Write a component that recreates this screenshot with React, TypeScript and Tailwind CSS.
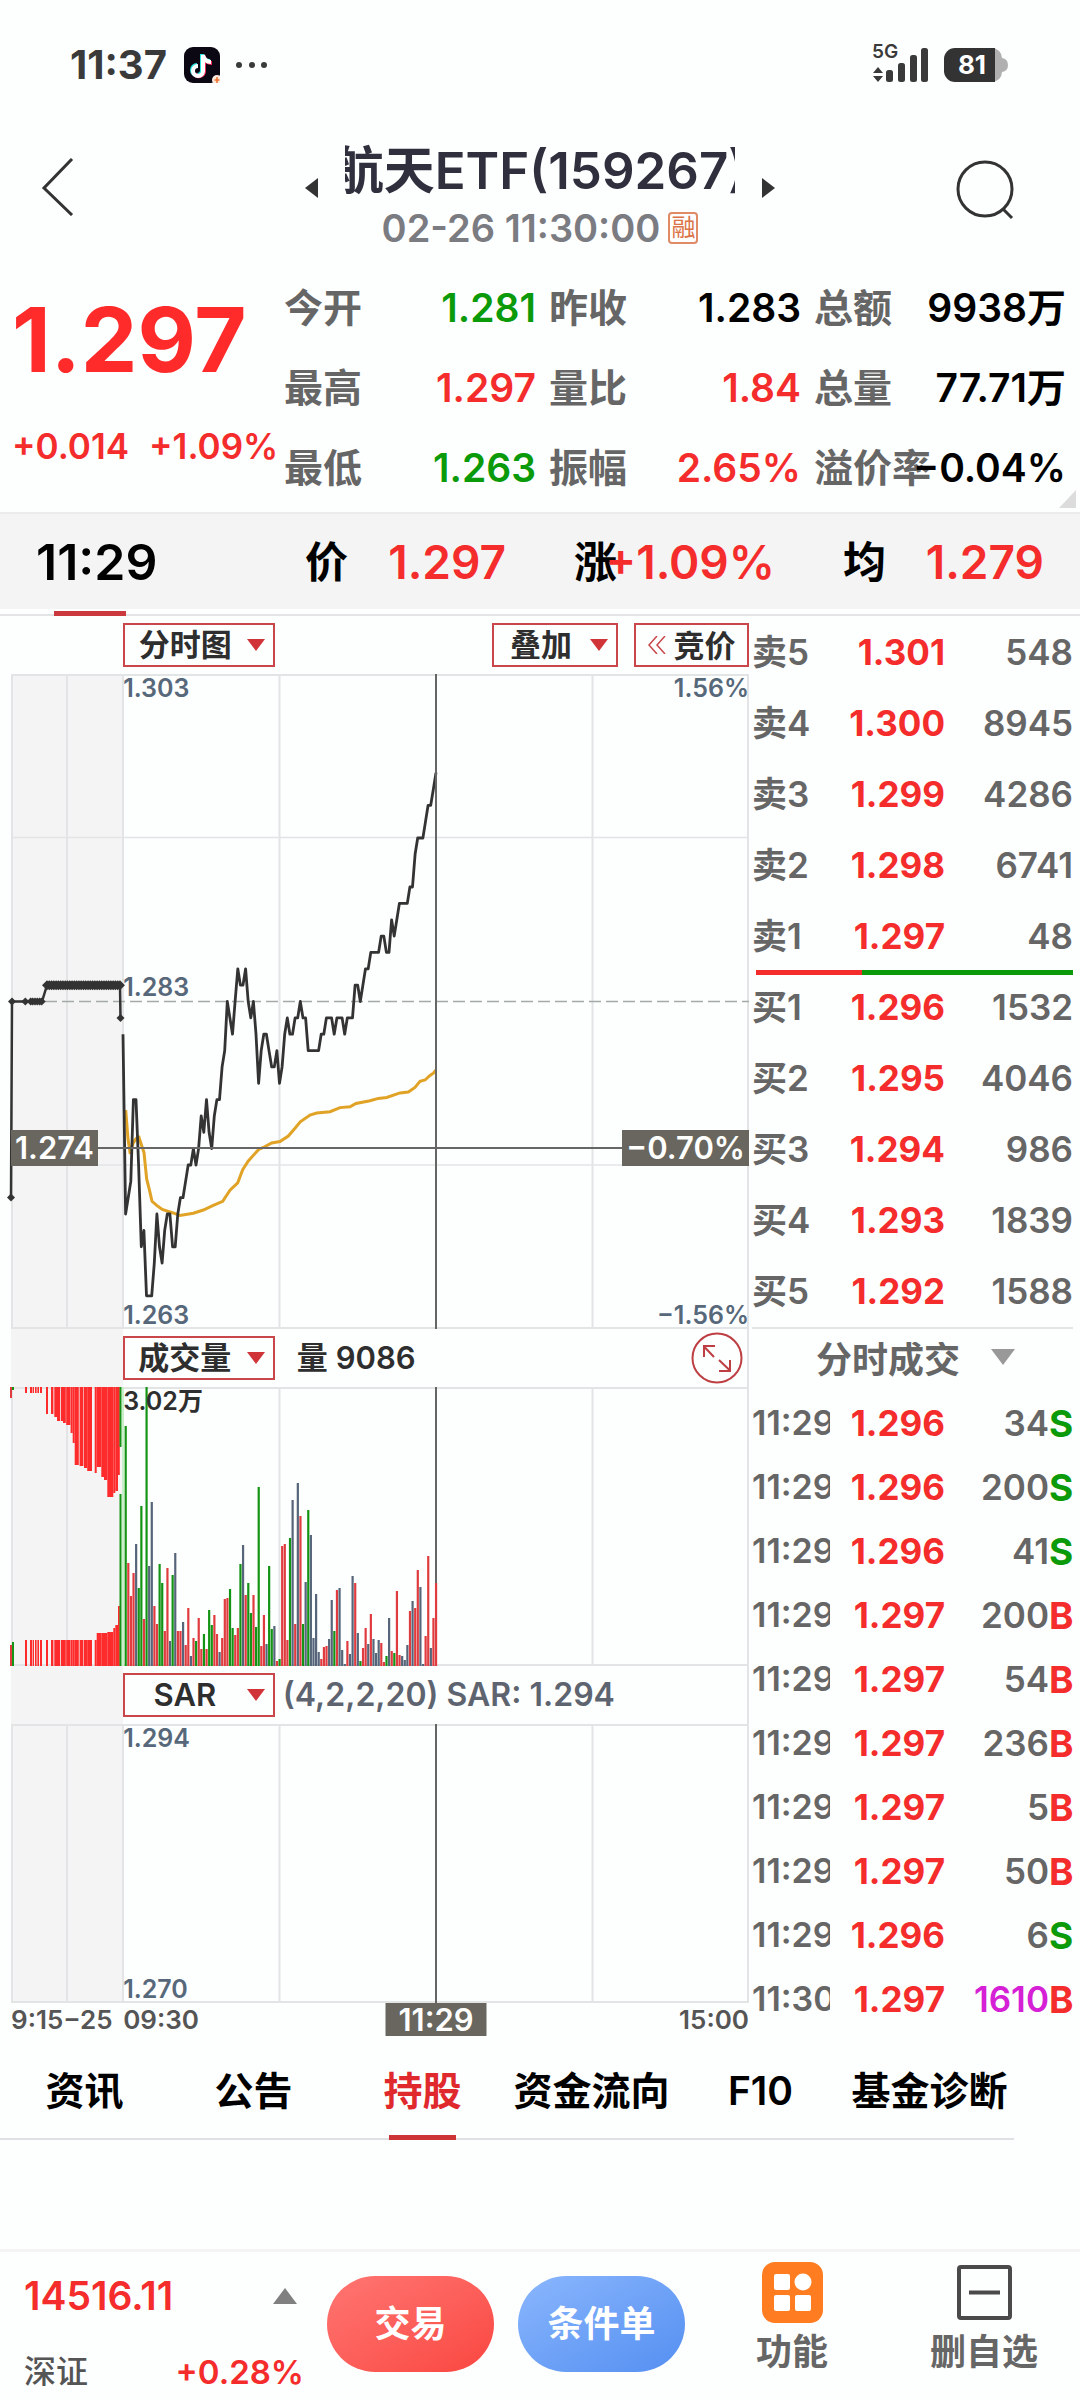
import React from "react";
import { clsx } from "clsx";

type TQuote = { label: string; value: string; color: string };
type TLevel = { label: string; price: string; volume: number };
type TTrade = { time: string; price: string; volume: number; side: "S" | "B" };

const RED = "text-[#f42c2c]";
const GREEN = "text-[#0a9a0a]";

const quotes: TQuote[] = [
  { label: "今开", value: "1.281", color: GREEN },
  { label: "昨收", value: "1.283", color: "text-black" },
  { label: "总额", value: "9938万", color: "text-black" },
  { label: "最高", value: "1.297", color: RED },
  { label: "量比", value: "1.84", color: RED },
  { label: "总量", value: "77.71万", color: "text-black" },
  { label: "最低", value: "1.263", color: GREEN },
  { label: "振幅", value: "2.65%", color: RED },
  { label: "溢价率", value: "−0.04%", color: "text-black" },
];

const asks: TLevel[] = [
  { label: "卖5", price: "1.301", volume: 548 },
  { label: "卖4", price: "1.300", volume: 8945 },
  { label: "卖3", price: "1.299", volume: 4286 },
  { label: "卖2", price: "1.298", volume: 6741 },
  { label: "卖1", price: "1.297", volume: 48 },
];

const bids: TLevel[] = [
  { label: "买1", price: "1.296", volume: 1532 },
  { label: "买2", price: "1.295", volume: 4046 },
  { label: "买3", price: "1.294", volume: 986 },
  { label: "买4", price: "1.293", volume: 1839 },
  { label: "买5", price: "1.292", volume: 1588 },
];

const trades: TTrade[] = [
  { time: "11:29", price: "1.296", volume: 34, side: "S" },
  { time: "11:29", price: "1.296", volume: 200, side: "S" },
  { time: "11:29", price: "1.296", volume: 41, side: "S" },
  { time: "11:29", price: "1.297", volume: 200, side: "B" },
  { time: "11:29", price: "1.297", volume: 54, side: "B" },
  { time: "11:29", price: "1.297", volume: 236, side: "B" },
  { time: "11:29", price: "1.297", volume: 5, side: "B" },
  { time: "11:29", price: "1.297", volume: 50, side: "B" },
  { time: "11:29", price: "1.296", volume: 6, side: "S" },
  { time: "11:30", price: "1.297", volume: 1610, side: "B" },
];

const tabs = ["资讯", "公告", "持股", "资金流向", "F10", "基金诊断"];

// price of every minute, in ticks of 0.001 from the previous close
const ticks = [
  -2, -13, -12, -11, -6, -6, -10, -15, -14, -18, -18, -18, -16, -13, -15, -16, -14, -13, -13, -15,
  -15, -13, -12, -12, -11, -10, -10, -9, -10, -9, -7, -8, -6, -8, -9, -7, -6, -6, -4, -3,
  0, -1, -2, 0, 2, 1, 1, 2, 0, -1, 0, -2, -5, -3, -2, -2, -3, -4, -4, -3,
  -5, -4, -2, -1, -2, -2, -1, -1, 0, -1, -1, -3, -3, -3, -3, -3, -2, -2, -1, -1,
  -1, -2, -1, -1, -1, -2, -1, -1, -1, 1, 1, 0, 1, 2, 2, 3, 3, 3, 3, 4,
  4, 3, 3, 5, 4, 5, 6, 6, 6, 6, 7, 7, 9, 10, 10, 10, 11, 12, 12, 13, 14,
];

const average =
  "114.7,436 117,465 119.3,480 122,469.4 125,464.8 128,463.4 130.7,471.7 133,478.6 135.7,505.2 138.3,515.3 141,527.3 145.7,531.4 151.3,535.5 161.3,538.7 169,541.5 182.3,539.2 192.3,536 202.3,531.4 211.7,527.3 219,516.2 226.7,508.9 231.7,495.6 237.3,486.9 247.7,475.4 252.3,473.5 260.7,469 269,467.6 277.3,462 284,454.3 289.3,447.8 299,441 305.7,439.1 319,437.7 329,433.6 339,432.7 345,429.5 359,426.7 367.3,424.4 375.7,423.5 389,418.9 397.3,418 404,413.4 409,407.4 414,406 419,401.5 422.3,399.2 425,396";

// one entry per minute from 9:31: colour letter and bar height
const volumes =
  "g240 r103 r70 r93 s122 g78 g160 r47 g279 s100 s164 r60 r42 g102 g83 r35 r98 s25 g91 s113 r35 r35 s44 r21 r58 s10 r28 g25 r48 r17 g32 r17 g56 g41 r51 r32 s14 r28 r67 r68 g77 g38 r31 r38 g102 s121 r71 g83 g53 r71 g39 g179 r20 r51 s22 g100 g37 s40 r5 g7 r120 r122 r26 g128 s166 r42 s183 r150 g42 s84 g156 s131 s28 s72 s14 r7 r19 r20 s27 s66 g35 r76 s78 s16 s2 r25 s12 s90 r83 s33 g5 r18 r38 s22 r52 s27 s13 s26 r23 r4 g10 s48 r15 g13 r75 r11 s10 s6 s21 r55 s65 r58 r96 s79 s2 r30 r110 s18 r48 r83".split(" ");

const volumeColors: Record<string, string> = { r: "#e03c3f", g: "#149414", s: "#56657a" };

// call auction: start, end, height from the top, height from the bottom
const auction = [
  [14, 16, 6, 26], [19, 21, 6, 26], [21.6, 23, 6, 26], [24, 25.6, 6, 26], [26.4, 28, 6, 26], [29, 31, 6, 26],
  [35, 37, 27, 26], [40, 42.4, 27, 26], [43.3, 46, 30, 26], [46, 49, 34, 26], [49.8, 52, 34, 26], [52, 54.8, 36, 26],
  [55.2, 59.4, 38, 26], [59.6, 61.7, 46, 26], [61.7, 63.7, 56, 26], [63.7, 67.8, 78, 26], [68.6, 72.4, 79, 26],
  [73, 76.2, 81, 26], [76.2, 81, 84, 26], [83.7, 85.7, 86, 26], [85.7, 90.3, 80, 33], [90.3, 93, 90, 33],
  [93, 96.3, 93, 33], [96.3, 102.3, 110, 34], [102.3, 104.3, 106, 38], [104.3, 107, 104, 41], [107, 108.8, 88, 60],
];

const minuteX = (i: number) => 112 + i * 2.608;
const tickY = (t: number) => 327.5 - t * 16.35;

function Triangle({ className }: { className?: string }) {
  return (
    <svg viewBox="0 0 18 12" className={className} aria-hidden="true">
      <path d="M0 0H18L9 12Z" fill="currentColor" />
    </svg>
  );
}

function Picker({ label, options, className }: { label: string; options: string[]; className?: string }) {
  return (
    <div className={clsx("relative h-11 border-2 border-[#c9474b] text-[#2e2e2e]", className)}>
      <select
        aria-label={label}
        className="h-full w-full appearance-none bg-transparent pr-7 text-center text-[31px] leading-10 font-semibold outline-none"
      >
        {options.map((item) => (
          <option key={item}>{item}</option>
        ))}
      </select>
      <Triangle className="pointer-events-none absolute top-[14px] right-2 h-3 w-[18px] text-[#d03438]" />
    </div>
  );
}

function StatusBar() {
  return (
    <div className="flex h-[130px] items-center pr-[72px] pl-[70px] text-[#3a3a3a]">
      <span className="text-[40px] font-bold">11:37</span>
      <svg viewBox="0 0 36 36" className="ml-[17px] h-9 w-9" aria-hidden="true">
        <rect width="36" height="36" rx="9" fill="#0b0713" />
        <g fill="none" strokeWidth="4" strokeLinecap="butt">
          <g stroke="#27e6e4">
            <path d="M18 7V23a5 5 0 1 1-5-5" />
            <path d="M18 8c1 4 4 6 8 6" />
          </g>
          <g stroke="#f5295a">
            <path d="M20 9V25a5 5 0 0 1-9 2" />
            <path d="M20 10c1 4 4 6 8 6" />
          </g>
          <g stroke="#fff">
            <path d="M19 8V24a5 5 0 1 1-5-5" />
            <path d="M19 8c1 5 4 7 8 7" />
          </g>
        </g>
        <circle cx="33" cy="33" r="5" fill="#fdebe0" />
        <path d="M33 30v6M30.500 33h5" stroke="#f0702c" strokeWidth="1.500" />
      </svg>
      <svg viewBox="0 0 32 6" className="ml-4 h-[6px] w-8" fill="currentColor" aria-hidden="true">
        <circle cx="3" cy="3" r="3" />
        <circle cx="16" cy="3" r="3" />
        <circle cx="28" cy="3" r="3" />
      </svg>
      <div className="ml-auto flex items-end gap-4 pb-1">
        <div className="relative h-[38px] w-14">
          <span className="absolute -top-1 left-0 text-[19px] leading-6 font-semibold">5G</span>
          <svg viewBox="0 0 56 38" className="h-full w-full" fill="currentColor" aria-hidden="true">
            <path d="M1 29l5-6 5 6ZM1 32h10l-5 6Z" />
            <rect x="14" y="26" width="7" height="12" rx="2.500" />
            <rect x="26" y="19" width="7" height="19" rx="2.500" />
            <rect x="38" y="11" width="7" height="27" rx="2.500" />
            <rect x="49" y="4" width="7" height="34" rx="2.500" />
          </svg>
        </div>
        <div className="relative flex h-[34px] w-16 items-center">
          <svg viewBox="0 0 64 34" className="absolute inset-0 h-full w-full" aria-hidden="true">
            <path d="M46 0h2a10 10 0 0 1 10 10q6 1 6 7t-6 7a10 10 0 0 1-10 10h-2Z" fill="#b0b0b0" />
            <path d="M51 0H11A11 11 0 0 0 0 11V23a11 11 0 0 0 11 11H51Z" fill="#333" />
          </svg>
          <span className="relative w-14 text-center text-[26px] leading-8 font-bold text-white">81</span>
        </div>
      </div>
    </div>
  );
}

function TitleBar() {
  return (
    <header className="flex h-[126px] items-start justify-between pr-[66px] pl-10">
      <button aria-label="返回" className="mt-7">
        <svg viewBox="0 0 36 58" className="h-[58px] w-9" fill="none" stroke="#333" strokeWidth="3" aria-hidden="true">
          <path d="M32 1L4 30L32 57" />
        </svg>
      </button>
      <div className="flex flex-col items-center pl-12">
        <div className="flex items-end gap-[27px]">
          <button aria-label="上一个">
            <svg viewBox="0 0 13 20" className="h-5 w-[13px]" aria-hidden="true">
              <path d="M13 0V20L0 10Z" fill="#333" />
            </svg>
          </button>
          <h1 className="mt-3 flex h-[56px] w-[390px] items-center justify-center overflow-hidden text-[51px] leading-none font-semibold whitespace-nowrap text-[#2f2f3d]">
            航天ETF(159267)
          </h1>
          <button aria-label="下一个">
            <svg viewBox="0 0 13 20" className="h-5 w-[13px]" aria-hidden="true">
              <path d="M0 0V20L13 10Z" fill="#333" />
            </svg>
          </button>
        </div>
        <div className="mt-[6px] flex items-center gap-2">
          <time className="text-[38px] leading-[48px] font-semibold text-[#7b7b82]">02-26 11:30:00</time>
          <span className="flex h-8 w-[30px] items-center justify-center rounded border-2 border-[#e08a66] text-2xl leading-none text-[#dc7347]">
            融
          </span>
        </div>
      </div>
      <button aria-label="搜索" className="mt-[30px]">
        <svg viewBox="0 0 58 60" className="h-[60px] w-[58px]" fill="none" stroke="#333" strokeWidth="3" aria-hidden="true">
          <circle cx="29" cy="29" r="27" />
          <path d="M47 49L56 58" />
        </svg>
      </button>
    </header>
  );
}

function Summary() {
  return (
    <section className="relative flex h-[256px] pt-3">
      <div className="flex w-[284px] shrink-0 flex-col pl-3 text-[#f42c2c]">
        <strong className="mt-4 text-[90px] leading-[112px] font-bold text-[#ff2a2a]">1.297</strong>
        <div className="mt-7 flex gap-5 text-[35px] leading-[44px] font-semibold whitespace-nowrap">
          <span>+0.014</span>
          <span>+1.09%</span>
        </div>
      </div>
      <dl className="grid min-w-0 flex-1 auto-rows-[80px] grid-cols-3 gap-x-[13px] pr-[14px] text-[39px]">
        {quotes.map((item) => (
          <div key={item.label} className="flex min-w-0 items-center justify-between whitespace-nowrap">
            <dt className="w-0 font-semibold text-[#666]">{item.label}</dt>
            <dd className={clsx("relative font-semibold", item.color)}>{item.value}</dd>
          </div>
        ))}
      </dl>
      <svg viewBox="0 0 17 18" className="absolute right-1 bottom-1 h-[18px] w-[17px]" aria-hidden="true">
        <path d="M17 0V18H0Z" fill="#dcdcdc" />
      </svg>
    </section>
  );
}

function CursorBar() {
  const items = [
    { label: "价", value: "1.297" },
    { label: "涨", value: "+1.09%" },
    { label: "均", value: "1.279" },
  ];
  return (
    <section className="relative h-[104px] border-b-2 border-[#e4e4e6]">
      <div className="grid h-[97px] grid-cols-4 items-center border-t-2 border-[#ececec] bg-[#f4f4f4] pt-[2px] pr-1 whitespace-nowrap">
        <div className="pl-9 text-[50px] font-semibold">11:29</div>
        {items.map((item) => (
          <div key={item.label} className="flex items-center justify-between pr-8 pl-9">
            <span className="w-0 text-[43px] font-semibold">{item.label}</span>
            <span className="relative text-[46px] font-semibold text-[#f42c2c]">{item.value}</span>
          </div>
        ))}
      </div>
      <div className="absolute -bottom-[2px] left-[54px] h-[5px] w-[72px] bg-[#c9393d]" />
    </section>
  );
}

function Grid({ height, rows }: { height: number; rows?: number[] }) {
  return (
    <g stroke="#e2e4e6" strokeWidth="2" fill="none">
      <rect x="0" y="0" width="112" height={height} fill="#f4f4f4" stroke="none" />
      <path d={`M1 0V${height}M56 0V${height}M112 0V${height}M268.500 0V${height}M581.500 0V${height}M737 0V${height}`} />
      <path d={`M0 1H738M0 ${height - 1}H738`} />
      {rows?.map((y) => <path key={y} d={`M0 ${y}H738`} strokeWidth="1.500" />)}
    </g>
  );
}

function PriceChart() {
  const line = ticks.map((t, i) => `${minuteX(i).toFixed(1)},${tickY(t).toFixed(1)}`).join(" ");
  const marks = [1, 14.300, 19.700, 21.700, 24, 26.300, 28.700, 30.700];
  const dense = Array.from({ length: 33 }, (_, i) => 36 + i * 2.280);
  return (
    <div className="relative">
      <svg viewBox="0 0 738 655" className="block h-auto w-full overflow-visible" role="img" aria-label="分时走势">
        <Grid height={655} rows={[163.5, 491]} />
        <path d="M0 327.500H738" stroke="#a4aaa8" strokeWidth="1.500" strokeDasharray="12 5" />
        <polyline points={average} fill="none" stroke="#e0a326" strokeWidth="3" />
        <g fill="#333" stroke="#333">
          <path d="M0 523.600L1 327.500H31L36 311.200H109L109.500 344" fill="none" strokeWidth="2.500" />
          <g stroke="none">
            {marks.map((x) => (
              <path key={x} d={`M${x - 4} 327.500l4-4 4 4-4 4Z`} />
            ))}
            {dense.map((x) => (
              <path key={x} d={`M${x - 5} 311.200l5-5 5 5-5 5Z`} />
            ))}
            <path d="M-4 523.600l4-4 4 4-4 4ZM105.500 344l4-4 4 4-4 4Z" />
          </g>
          <polyline points={line} fill="none" strokeWidth="2.800" strokeLinejoin="round" />
        </g>
        <path d="M0 474H738M425 0V655" stroke="#666" strokeWidth="2" />
      </svg>
      <div className="absolute inset-y-0 right-0 left-[15.2%] text-[25px] leading-7 font-semibold text-[#56687a]">
        <span className="absolute top-0 left-0">1.303</span>
        <span className="absolute top-[45.700%] left-0">1.283</span>
        <span className="absolute bottom-0 left-0">1.263</span>
        <span className="absolute top-0 right-0">1.56%</span>
        <span className="absolute right-0 bottom-0">−1.56%</span>
      </div>
      <div className="absolute inset-x-0 top-[69.600%] flex justify-between text-[31px] leading-9 font-semibold text-white">
        <span className="bg-[#68665e] px-1">1.274</span>
        <span className="bg-[#68665e] px-1">−0.70%</span>
      </div>
    </div>
  );
}

function VolumeChart() {
  return (
    <div className="relative">
      <svg viewBox="0 0 738 279" className="block h-auto w-full overflow-visible" role="img" aria-label="成交量">
        <Grid height={279} />
        <rect x="111" y="0" width="2" height="279" fill="#c9efc9" />
        {auction.map(([x1, x2, top, bottom]) => (
          <g key={x1} fill="#fd2b2b">
            <rect x={x1} y="0" width={x2 - x1} height={top} />
            <rect x={x1} y={279 - bottom} width={x2 - x1} height={bottom} />
          </g>
        ))}
        <rect x="-1" y="0" width="2" height="11" fill="#e03c3f" />
        <rect x="-1" y="258" width="2" height="21" fill="#e03c3f" />
        <rect x="1" y="0" width="2" height="3" fill="#149414" />
        <rect x="1" y="255" width="2" height="24" fill="#149414" />
        <rect x="108.500" y="0" width="2" height="60" fill="#149414" />
        <rect x="108.500" y="107" width="2" height="172" fill="#149414" />
        {volumes.map((item, i) => {
          const height = Number(item.slice(1));
          return (
            <rect key={i} x={minuteX(i + 1) - 1} y={279 - height} width="2.200" height={height} fill={volumeColors[item[0]]} />
          );
        })}
        <path d="M425 0V196" stroke="#666" strokeWidth="2" />
      </svg>
      <span className="absolute top-0 left-[15.2%] text-[25px] leading-7 font-semibold text-[#2e2e2e]">3.02万</span>
    </div>
  );
}

function SarChart() {
  return (
    <div className="relative">
      <svg viewBox="0 0 738 279" className="block h-auto w-full" role="img" aria-label="SAR">
        <Grid height={279} />
        <path d="M425 0V279" stroke="#666" strokeWidth="2" />
      </svg>
      <div className="absolute inset-y-0 left-[15.2%] flex flex-col justify-between text-[25px] leading-7 font-semibold text-[#56687a]">
        <span>1.294</span>
        <span>1.270</span>
      </div>
    </div>
  );
}

function Charts() {
  return (
    <section className="min-w-0 pl-[11px] whitespace-nowrap">
      <div className="flex h-[58px] items-center">
        <div className="w-[15.200%]" />
        <Picker label="图表类型" options={["分时图"]} className="w-[152px]" />
        <Picker label="叠加" options={["叠加"]} className="ml-auto w-[126px]" />
        <button className="ml-4 flex h-11 w-[115px] items-center justify-center gap-2 border-2 border-[#c9474b] text-[31px] leading-none font-semibold text-[#2e2e2e]">
          <svg viewBox="0 0 18 18" className="h-[18px] w-[18px]" fill="none" stroke="#c9474b" strokeWidth="1.500" aria-hidden="true">
            <path d="M9 0L1 9L9 18M17 0L9 9L17 18" />
          </svg>
          竞价
        </button>
      </div>
      <PriceChart />
      <div className="flex h-[58px] items-center border-r-2 border-[#e2e4e6]">
        <div className="h-full w-[15.200%] bg-[#f4f4f4]" />
        <Picker label="副图指标" options={["成交量"]} className="w-[152px]" />
        <span className="ml-[22px] text-[31px] font-semibold text-[#2e2e2e]">量 9086</span>
        <button aria-label="全屏" className="mr-1 ml-auto">
          <svg viewBox="0 0 52 52" className="h-[52px] w-[52px]" fill="none" stroke="#bd3f43" strokeWidth="2" aria-hidden="true">
            <circle cx="26" cy="26" r="24.500" />
            <path d="M23 25L13 14.500M13 25V14H24M28 28L39 38.500M39 28V39H28" />
          </svg>
        </button>
      </div>
      <VolumeChart />
      <div className="flex h-[58px] items-center border-r-2 border-[#e2e4e6]">
        <div className="h-full w-[15.200%] bg-[#f4f4f4]" />
        <Picker label="副图指标二" options={["SAR"]} className="w-[152px]" />
        <span className="ml-2 text-[32px] font-semibold text-[#5d6470]">(4,2,2,20) SAR: 1.294</span>
      </div>
      <SarChart />
      <div className="relative flex h-[33px] items-center text-[26px] leading-none font-semibold text-[#555]">
        <span className="w-[15.200%]">9:15−25</span>
        <span>09:30</span>
        <span className="ml-auto">15:00</span>
        <span className="absolute top-0 left-[57.600%] flex h-full w-[101px] -translate-x-1/2 items-center justify-center bg-[#68665e] text-[31px] text-white">
          11:29
        </span>
      </div>
    </section>
  );
}

function Levels({ rows }: { rows: TLevel[] }) {
  return (
    <table className="w-full table-fixed text-[35px] leading-none font-semibold text-[#666]">
      <tbody>
        {rows.map((row) => (
          <tr key={row.label} className="h-[71px]">
            <th scope="row" className="w-[72px] p-0 text-left font-semibold">{row.label}</th>
            <td className="w-[121px] p-0 text-right font-bold text-[#f42c2c]">{row.price}</td>
            <td className="p-0 text-right">{row.volume}</td>
          </tr>
        ))}
      </tbody>
    </table>
  );
}

function Trades() {
  return (
    <table className="w-full table-fixed text-[35px] leading-none font-semibold text-[#666]">
      <tbody>
        {trades.map((row, i) => (
          <tr key={i} className="h-16">
            <td className="w-[78px] p-0">
              <div className="overflow-hidden text-[34px]">{row.time}</div>
            </td>
            <td className="w-[115px] p-0 text-right font-bold text-[#f42c2c]">{row.price}</td>
            <td className={clsx("p-0 text-right", row.volume > 1000 && "text-[#d520d5]")}>{row.volume}</td>
            <td className={clsx("w-6 p-0 text-right text-[37px] font-bold", row.side === "S" ? GREEN : RED)}>{row.side}</td>
          </tr>
        ))}
      </tbody>
    </table>
  );
}

function OrderBook() {
  return (
    <section className="min-w-0 pt-px pr-[7px] pl-[3px]">
      <Levels rows={asks} />
      <div className="relative">
        <div className="absolute inset-x-0 -top-[2px] ml-1 flex h-[5px]">
          <div className="w-1/3 bg-[#f42c2c]" />
          <div className="flex-1 bg-[#0a9a0a]" />
        </div>
      </div>
      <Levels rows={bids} />
      <div className="relative flex h-16 items-center border-t-2 border-[#e2e4e6] text-[#666]">
        <select
          aria-label="成交明细"
          className="w-full appearance-none bg-transparent pl-16 text-[36px] leading-none font-semibold outline-none"
        >
          <option>分时成交</option>
        </select>
        <Triangle className="pointer-events-none absolute top-5 right-[58px] h-4 w-6 text-[#999]" />
      </div>
      <Trades />
    </section>
  );
}

function Tabs() {
  return (
    <div className="pr-[66px]">
      <nav className="grid h-[104px] grid-cols-6 border-b-2 border-[#dfe1e4]">
        {tabs.map((item) => (
          <a
            key={item}
            href="#"
            className={clsx(
              "relative flex items-center justify-center pt-2 text-[39px] font-semibold whitespace-nowrap",
              item === "持股" ? "text-[#e0292d]" : "text-black"
            )}
          >
            {item}
            {item === "持股" && <span className="absolute -bottom-[2px] h-[5px] w-[67px] bg-[#cc3438]" />}
          </a>
        ))}
      </nav>
    </div>
  );
}

function BottomBar() {
  return (
    <footer className="mt-auto flex h-[151px] items-start border-t-[3px] border-[#f4f4f4] whitespace-nowrap">
      <button className="grid w-[304px] grid-cols-2 pt-5 pl-6 text-left font-semibold text-[#f42c2c]">
        <span className="text-[39px] leading-[48px]">14516.11</span>
        <svg viewBox="0 0 24 16" className="mt-4 mr-[7px] h-4 w-6 justify-self-end" aria-hidden="true">
          <path d="M0 16H24L12 0Z" fill="#808080" />
        </svg>
        <span className="mt-7 text-[32px] leading-[48px] font-medium text-[#555]">深证</span>
        <span className="mt-7 justify-self-end text-[33px] leading-[48px]">+0.28%</span>
      </button>
      <div className="flex flex-1 items-start text-[36px] font-semibold text-white">
        <button className="mt-6 ml-[23px] h-24 w-[167px] rounded-[48px] bg-linear-to-br from-[#ff7572] to-[#fa4540]">交易</button>
        <button className="mt-6 ml-6 h-24 w-[167px] rounded-[48px] bg-linear-to-br from-[#8ab6fd] to-[#548ff1]">条件单</button>
        <button className="mt-[10px] ml-auto flex w-[110px] flex-col items-center gap-[2px] text-[#666]">
          <svg viewBox="0 0 61 61" className="h-[61px] w-[61px]" aria-hidden="true">
            <rect width="61" height="61" rx="13" fill="#ff7d20" />
            <g fill="#fff">
              <rect x="12" y="12" width="16" height="16" rx="2" />
              <circle cx="41" cy="20" r="8.500" />
              <rect x="12" y="33" width="16" height="16" rx="2" />
              <rect x="33" y="33" width="16" height="16" rx="2" />
            </g>
          </svg>
          功能
        </button>
        <button className="mt-[10px] mr-[41px] ml-[82px] flex w-[110px] flex-col items-center gap-[2px] text-[#666]">
          <svg viewBox="0 0 61 61" className="h-[61px] w-[61px]" fill="none" stroke="#4a4a4a" strokeWidth="4" aria-hidden="true">
            <rect x="5" y="5" width="51" height="51" rx="2" />
            <path d="M15 30.500H46" />
          </svg>
          删自选
        </button>
      </div>
    </footer>
  );
}

function App() {
  return (
    <main className="flex min-h-screen flex-col overflow-hidden bg-[#fdfefe] font-['Inter','Noto_Sans_CJK_SC',sans-serif] text-black">
      <StatusBar />
      <TitleBar />
      <Summary />
      <CursorBar />
      <div className="grid grid-cols-[minmax(0,749fr)_minmax(0,331fr)]">
        <Charts />
        <OrderBook />
      </div>
      <Tabs />
      <BottomBar />
    </main>
  );
}

export default App;
